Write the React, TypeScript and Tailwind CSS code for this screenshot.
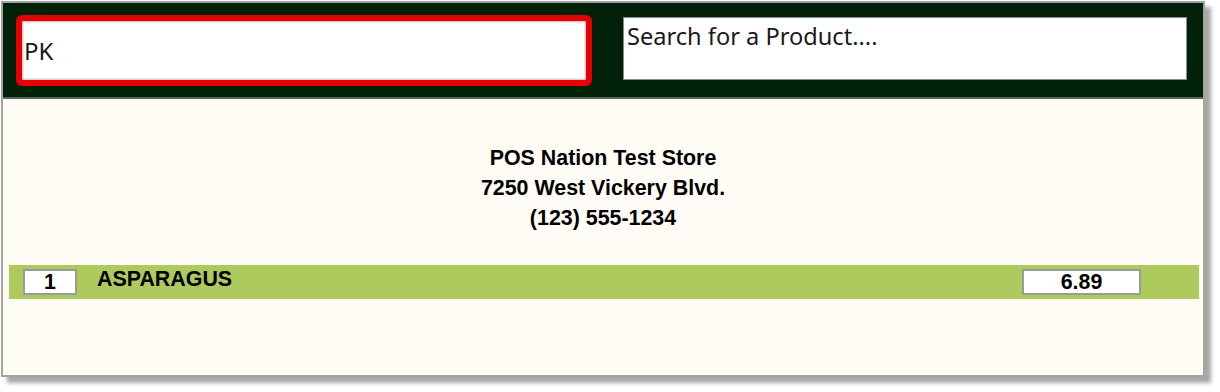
import React from "react";

export default function App() {
  return (
    <div className="w-[1220px] h-[392px] bg-white pl-px pt-px overflow-hidden">
      <div className="w-[1204px] h-[376px] border-2 border-[#a3a3a3] bg-[#fffbf5] shadow-[6px_6px_4px_rgba(0,0,0,0.35)] flex flex-col">
        <div className="h-[96px] shrink-0 bg-[#012208] border-b-2 border-[#56695a] flex items-start">
          <div className="ml-[13px] mt-[12px] w-[576px] h-[71px] border-[6px] border-[#e60000] rounded-[6px]">
            <div className="h-full bg-white shadow-[inset_0_0_3px_rgba(0,0,0,0.55)] flex items-center pl-[2px] text-[24px] text-[#1a1a1a] font-['Noto_Sans',sans-serif]">
              PK
            </div>
          </div>
          <div className="ml-[31px] mt-[14px] w-[564px] h-[63px] border border-[#8a8a8a] bg-white px-[3px] pt-[2px] text-[23.6px] leading-[32px] text-[#1a1a1a] font-['Noto_Sans',sans-serif]">
            Search for a Product....
          </div>
        </div>
        <div className="mt-[44px] text-center font-bold text-[21.4px] leading-[30px] text-black font-['Liberation_Sans',Arial,sans-serif]">
          <div>POS Nation Test Store</div>
          <div>7250 West Vickery Blvd.</div>
          <div>(123) 555-1234</div>
        </div>
        <div className="mt-[32px] ml-[6px] w-[1190px] h-[34px] bg-[#adcb5d] flex items-center pl-[14px] font-bold text-[21.4px] text-black font-['Liberation_Sans',Arial,sans-serif]">
          <div className="w-[54px] h-[26px] border-2 border-[#9a9a9a] bg-white flex items-center justify-center leading-[22px]">
            1
          </div>
          <div className="ml-[20px] flex-1 self-start pt-[2px] leading-[24px]">ASPARAGUS</div>
          <div className="w-[119px] h-[26px] mr-[58px] border-2 border-[#9a9a9a] bg-white flex items-center justify-center leading-[22px]">
            6.89
          </div>
        </div>
      </div>
    </div>
  );
}
